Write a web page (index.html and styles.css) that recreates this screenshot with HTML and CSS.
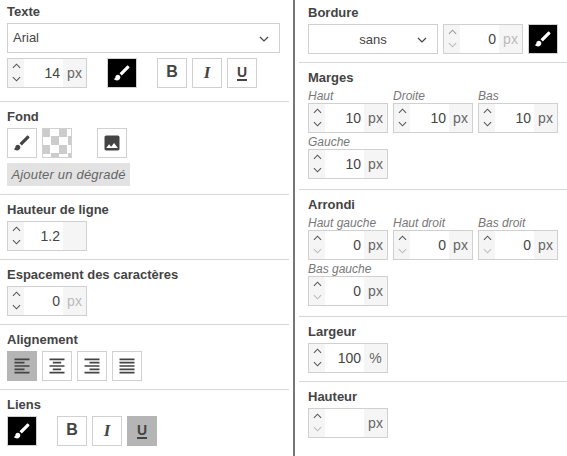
FILE: index.html
```html
<!DOCTYPE html>
<html lang="fr">

<head>
    <meta charset="UTF-8">
    <meta name="viewport" content="width=device-width, initial-scale=1.0">
    <title>Styles</title>
    <link rel="stylesheet" href="styles.css">
</head>

<body>
    <svg class="sprites" aria-hidden="true">
        <symbol id="i-brush" viewBox="0 0 24 24"><path d="M7 14c-1.66 0-3 1.34-3 3 0 1.31-1.16 2-2 2 .92 1.22 2.49 2 4 2 2.21 0 4-1.79 4-4 0-1.66-1.34-3-3-3zm13.71-9.37l-1.34-1.34c-.39-.39-1.02-.39-1.41 0L9 12.25 11.75 15l8.96-8.96c.39-.39.39-1.02 0-1.41z"/></symbol>
        <symbol id="i-photo" viewBox="0 0 24 24"><path d="M21 19V5c0-1.1-.9-2-2-2H5c-1.1 0-2 .9-2 2v14c0 1.1.9 2 2 2h14c1.1 0 2-.9 2-2zM8.5 13.5l2.5 3.01L14.5 12l4.5 6H5l3.5-4.5z"/></symbol>
        <symbol id="i-left" viewBox="0 0 24 24"><path d="M15 15H3v2h12v-2zm0-8H3v2h12V7zM3 13h18v-2H3v2zm0 8h18v-2H3v2zM3 3v2h18V3H3z"/></symbol>
        <symbol id="i-center" viewBox="0 0 24 24"><path d="M7 15v2h10v-2H7zm-4 6h18v-2H3v2zm0-8h18v-2H3v2zm4-6v2h10V7H7zM3 3v2h18V3H3z"/></symbol>
        <symbol id="i-right" viewBox="0 0 24 24"><path d="M3 21h18v-2H3v2zm6-4h12v-2H9v2zm-6-4h18v-2H3v2zm6-4h12V7H9v2zM3 3v2h18V3H3z"/></symbol>
        <symbol id="i-justify" viewBox="0 0 24 24"><path d="M3 21h18v-2H3v2zm0-4h18v-2H3v2zm0-4h18v-2H3v2zm0-4h18V7H3v2zm0-6v2h18V3H3z"/></symbol>
        <symbol id="i-up" viewBox="0 0 10 6"><path d="M1 5l4-4 4 4" fill="none" stroke="currentColor" stroke-width="1.2"/></symbol>
        <symbol id="i-down" viewBox="0 0 10 6"><path d="M1 1l4 4 4-4" fill="none" stroke="currentColor" stroke-width="1.2"/></symbol>
    </svg>

    <div class="panel">
        <!-- colonne gauche -->
        <div class="column left">
            <section class="group first">
                <h3>Texte</h3>
                <div class="select wide"><span class="select-value">Arial</span><svg class="chev"><use href="#i-down"/></svg></div>
                <div class="row text-row">
                    <div class="number">
                        <div class="spin"><svg><use href="#i-up"/></svg><svg><use href="#i-down"/></svg></div>
                        <span class="value">14</span><span class="unit">px</span>
                    </div>
                    <button class="btn black ml-20"><svg class="icon"><use href="#i-brush"/></svg></button>
                    <button class="btn ml-20 b">B</button>
                    <button class="btn i">I</button>
                    <button class="btn u"><span>U</span></button>
                </div>
            </section>

            <section class="group">
                <h3>Fond</h3>
                <div class="row">
                    <button class="btn"><svg class="icon"><use href="#i-brush"/></svg></button>
                    <div class="checker"></div>
                    <button class="btn ml-25"><svg class="icon"><use href="#i-photo"/></svg></button>
                </div>
                <button class="gradient">Ajouter un dégradé</button>
            </section>

            <section class="group">
                <h3>Hauteur de ligne</h3>
                <div class="number">
                    <div class="spin"><svg><use href="#i-up"/></svg><svg><use href="#i-down"/></svg></div>
                    <span class="value">1.2</span><span class="unit"></span>
                </div>
            </section>

            <section class="group">
                <h3>Espacement des caractères</h3>
                <div class="number">
                    <div class="spin"><svg><use href="#i-up"/></svg><svg><use href="#i-down"/></svg></div>
                    <span class="value">0</span><span class="unit off">px</span>
                </div>
            </section>

            <section class="group">
                <h3>Alignement</h3>
                <div class="row">
                    <button class="btn on"><svg class="icon"><use href="#i-left"/></svg></button>
                    <button class="btn"><svg class="icon"><use href="#i-center"/></svg></button>
                    <button class="btn"><svg class="icon"><use href="#i-right"/></svg></button>
                    <button class="btn"><svg class="icon"><use href="#i-justify"/></svg></button>
                </div>
            </section>

            <section class="group last">
                <h3>Liens</h3>
                <div class="row">
                    <button class="btn black"><svg class="icon"><use href="#i-brush"/></svg></button>
                    <button class="btn ml-20 b">B</button>
                    <button class="btn i">I</button>
                    <button class="btn u on"><span>U</span></button>
                </div>
            </section>
        </div>

        <!-- colonne droite -->
        <div class="column right">
            <section class="group first">
                <h3>Bordure</h3>
                <div class="row">
                    <div class="select border-style"><span class="select-value">sans</span><svg class="chev"><use href="#i-down"/></svg></div>
                    <div class="number">
                        <div class="spin low"><svg><use href="#i-up"/></svg><svg class="off"><use href="#i-down"/></svg></div>
                        <span class="value">0</span><span class="unit off">px</span>
                    </div>
                    <button class="btn black"><svg class="icon"><use href="#i-brush"/></svg></button>
                </div>
            </section>

            <section class="group">
                <h3>Marges</h3>
                <div class="fields">
                    <div class="field">
                        <label>Haut</label>
                        <div class="number">
                            <div class="spin"><svg><use href="#i-up"/></svg><svg><use href="#i-down"/></svg></div>
                            <span class="value">10</span><span class="unit">px</span>
                        </div>
                    </div>
                    <div class="field">
                        <label>Droite</label>
                        <div class="number">
                            <div class="spin"><svg><use href="#i-up"/></svg><svg><use href="#i-down"/></svg></div>
                            <span class="value">10</span><span class="unit">px</span>
                        </div>
                    </div>
                    <div class="field">
                        <label>Bas</label>
                        <div class="number">
                            <div class="spin"><svg><use href="#i-up"/></svg><svg><use href="#i-down"/></svg></div>
                            <span class="value">10</span><span class="unit">px</span>
                        </div>
                    </div>
                    <div class="field">
                        <label>Gauche</label>
                        <div class="number">
                            <div class="spin"><svg><use href="#i-up"/></svg><svg><use href="#i-down"/></svg></div>
                            <span class="value">10</span><span class="unit">px</span>
                        </div>
                    </div>
                </div>
            </section>

            <section class="group">
                <h3>Arrondi</h3>
                <div class="fields">
                    <div class="field">
                        <label>Haut gauche</label>
                        <div class="number">
                            <div class="spin"><svg><use href="#i-up"/></svg><svg class="off"><use href="#i-down"/></svg></div>
                            <span class="value">0</span><span class="unit">px</span>
                        </div>
                    </div>
                    <div class="field">
                        <label>Haut droit</label>
                        <div class="number">
                            <div class="spin"><svg><use href="#i-up"/></svg><svg class="off"><use href="#i-down"/></svg></div>
                            <span class="value">0</span><span class="unit">px</span>
                        </div>
                    </div>
                    <div class="field">
                        <label>Bas droit</label>
                        <div class="number">
                            <div class="spin"><svg><use href="#i-up"/></svg><svg class="off"><use href="#i-down"/></svg></div>
                            <span class="value">0</span><span class="unit">px</span>
                        </div>
                    </div>
                    <div class="field">
                        <label>Bas gauche</label>
                        <div class="number">
                            <div class="spin"><svg><use href="#i-up"/></svg><svg class="off"><use href="#i-down"/></svg></div>
                            <span class="value">0</span><span class="unit">px</span>
                        </div>
                    </div>
                </div>
            </section>

            <section class="group">
                <h3>Largeur</h3>
                <div class="number">
                    <div class="spin"><svg><use href="#i-up"/></svg><svg><use href="#i-down"/></svg></div>
                    <span class="value">100</span><span class="unit">%</span>
                </div>
            </section>

            <section class="group last">
                <h3>Hauteur</h3>
                <div class="number">
                    <div class="spin"><svg><use href="#i-up"/></svg><svg class="off"><use href="#i-down"/></svg></div>
                    <span class="value"></span><span class="unit">px</span>
                </div>
            </section>
        </div>
    </div>
</body>

</html>
```

FILE: styles.css
```css
* {
    box-sizing: border-box;
}

body {
    margin: 0;
    background: #ffffff;
    color: #444444;
    font-family: "Liberation Sans", Arial, sans-serif;
    font-size: 13px;
    overflow: hidden;
}

.sprites {
    display: none;
}

.panel {
    display: flex;
    width: 567px;
    height: 456px;
    overflow: hidden;
}

.column.left {
    width: 289px;
    flex: none;
}

.column.right {
    flex: 1;
    margin-left: 4px;
    padding-left: 4px;
    border-left: 2px solid #777777;
}

/* groupes */
.group {
    padding: 7px 7px 8px;
    border-bottom: 1px solid #d6d6d6;
}

.group.first {
    padding-top: 4px;
}

.group.last {
    border-bottom: none;
}

.right .group {
    padding-left: 9px;
    padding-right: 9px;
}

.right .group.first {
    padding-top: 5px;
}

h3 {
    margin: 0 0 4px;
    font-size: 13px;
    line-height: 15px;
    font-weight: bold;
    color: #444444;
}

.row {
    display: flex;
    gap: 5px;
}

.text-row {
    margin-bottom: 5px;
}

.ml-20 {
    margin-left: 15px;
}

.ml-25 {
    margin-left: 20px;
}

/* select */
.select {
    display: flex;
    align-items: center;
    height: 30px;
    border: 1px solid #d0d0d0;
    background: #ffffff;
    position: relative;
}

.select.wide {
    width: 273px;
    margin-bottom: 5px;
    padding: 0 0 1px 5px;
}

.select.border-style {
    width: 130px;
    justify-content: center;
}

.chev {
    position: absolute;
    right: 10px;
    top: 12px;
    width: 10px;
    height: 6px;
}

/* champ numerique */
.number {
    display: flex;
    width: 80px;
    height: 30px;
    border: 1px solid #d0d0d0;
    background: #ffffff;
    line-height: 28px;
}

.spin {
    width: 16px;
    flex: none;
    display: flex;
    flex-direction: column;
    align-items: center;
    justify-content: space-between;
    padding: 4px 0 5px;
    background: #f5f5f5;
    color: #555555;
}

.spin svg {
    width: 9px;
    height: 6px;
}

.spin svg.off {
    color: #bbbbbb;
}

.spin.low {
    color: #999999;
}

.value {
    flex: 1;
    text-align: right;
    padding-right: 3px;
    font-size: 14px;
}

.unit {
    width: 23px;
    flex: none;
    text-align: center;
    background: #f5f5f5;
    color: #666666;
    font-size: 14px;
}

.unit.off {
    color: #bbbbbb;
}

/* boutons */
.btn {
    width: 30px;
    height: 30px;
    padding: 0;
    display: flex;
    align-items: center;
    justify-content: center;
    border: 1px solid #d0d0d0;
    background: #ffffff;
    color: #444444;
    font-family: inherit;
    font-size: 16px;
    font-weight: bold;
}

.btn.b {
    padding-bottom: 2px;
}

.btn.on {
    background: #b5b5b5;
    border-color: #b5b5b5;
}

.btn.black {
    background: #000000;
    color: #ffffff;
}

.btn.i {
    font-family: "Liberation Serif", serif;
    font-style: italic;
    font-size: 17px;
    padding-bottom: 1px;
}

.btn.u span {
    display: block;
    line-height: 13px;
    border-bottom: 2px solid #444444;
    font-size: 14px;
    font-weight: bold;
}

.icon {
    width: 20px;
    height: 20px;
    fill: currentColor;
}

.checker {
    width: 30px;
    height: 30px;
    border: 1px solid #d0d0d0;
    background: repeating-conic-gradient(#ffffff 0 25%, #cccccc 0 50%) 0 0 / 17px 17px;
    background-origin: border-box;
}

.gradient {
    display: block;
    width: 123px;
    height: 23px;
    margin-top: 5px;
    padding: 0;
    border: none;
    background: #e2e2e2;
    color: #666666;
    font-family: inherit;
    font-size: 13px;
    font-style: italic;
    letter-spacing: 0.2px;
    white-space: nowrap;
}

/* champs nommes */
.fields {
    display: grid;
    grid-template-columns: repeat(3, 80px);
    column-gap: 5px;
    row-gap: 2px;
    margin-bottom: 2px;
}

.field label {
    display: block;
    height: 14px;
    line-height: 14px;
    font-style: italic;
    color: #777777;
    font-size: 12px;
}
```
